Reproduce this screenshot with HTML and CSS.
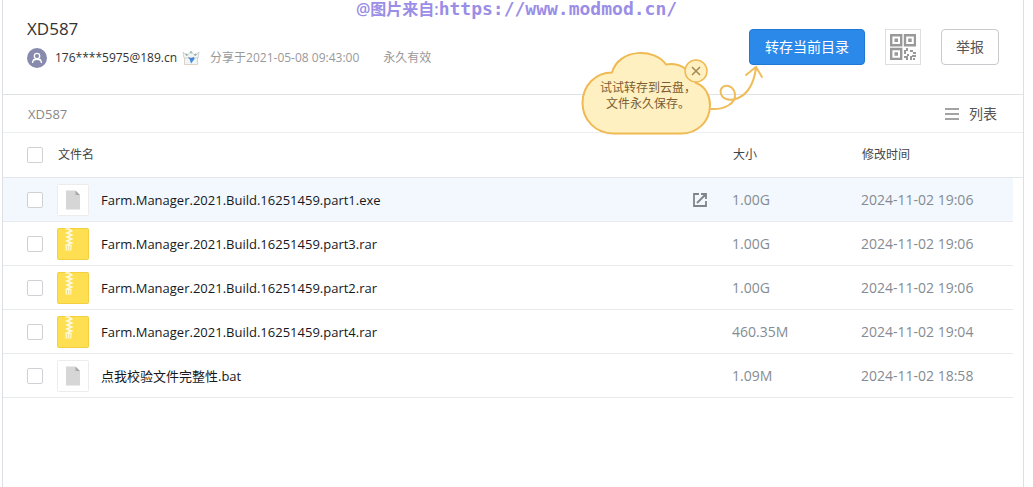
FILE: index.html
```html
<!DOCTYPE html>
<html lang="zh-CN">
<head>
<meta charset="utf-8">
<title>XD587</title>
<link rel="stylesheet" href="styles.css">
</head>
<body>
<svg class="defs" aria-hidden="true">
  <symbol id="doc" viewBox="0 0 32 32">
    <rect x=".5" y=".5" width="31" height="31" rx="1" fill="#fff" stroke="#ececec"/>
    <path d="M9 6.500H18.500L23 11V25.500H9Z" fill="#d6d6d6"/>
    <path d="M18.500 6.500V11H23Z" fill="#a9a9a9"/>
  </symbol>
  <symbol id="rar" viewBox="0 0 32 32">
    <rect width="32" height="32" rx="2" fill="#f4cf3f"/>
    <rect x="1" y="1" width="30" height="30" rx="1" fill="#ffdf52"/>
    <path d="M8.500 1H12l2.500 2L10 5l4.500 2L10 9l4.500 2L10 13l4.500 2L10 17l4.500 1" fill="none" stroke="#fffbe2" stroke-width="1.700"/>
    <path d="M8.500 17.500h6v5h-6z" fill="#fff7cc"/>
    <path d="M10.500 18v4M12.800 18v4" stroke="#f6d964" stroke-width=".8"/>
  </symbol>
</svg>
<div class="watermark"><span>@图片来自:</span><span class="watermark-url">https://www.modmod.cn/</span></div>
<main class="panel">
  <header class="share">
    <div class="share-info">
      <h1 class="title">XD587</h1>
      <div class="meta">
        <svg class="avatar" viewBox="0 0 20 20"><circle cx="10" cy="10" r="10" fill="#888bad"/><circle cx="10" cy="8" r="2.700" fill="none" stroke="#fff" stroke-width="1.300"/><path d="M5.500 15c.2-5 8.800-5 9 0M7 11l-1 2M13 11l1 2" fill="none" stroke="#fff" stroke-width="1.300"/></svg>
        <span class="user">176****5975@189.cn</span>
        <svg class="badge" viewBox="0 0 18 16"><path d="M2.500 5.500h13v9h-13z" fill="#eef5fb" stroke="#ddd2c5"/><path d="M1 2l4 4 4-5 4 5 4-4-1 6H2Z" fill="#f4f5f4" stroke="#c9c8c5" stroke-width=".8"/><path d="M6 7l3 1 3-1 .5 2L9 13.500 8 10Z" fill="#4389d5"/><path d="M3.500 4l2 1M12.500 5l2-1M9 1.500v2" stroke="#82b8b4" stroke-width="1.400"/></svg>
        <span class="shared">分享于2021-05-08 09:43:00</span>
        <span class="valid">永久有效</span>
      </div>
    </div>
    <div class="actions">
      <div class="save">
        <button class="btn primary" type="button">转存当前目录</button>
        <div class="tip">
          <svg class="tip-art" viewBox="0 0 180 86">
            <path d="M33 81.500C16 81.500 2.500 68 2.500 51C2.500 33 16 20.500 32 20.500C39 -4 75 -4 86 12.500C99 10 114 19 116 31C126 34 130 45 130 53C130 70 117 81.500 101 81.500Z" fill="#fff0c1" stroke="#efb953" stroke-width="2"/>
            <circle cx="116" cy="19" r="11" fill="#fff0c1" stroke="#efb953" stroke-width="1.500"/>
            <path d="M131 57C145 58 156 51 155 42C153 30 138 32 141 42C144 52 171 52 176 16M166 23L176 15L182 25" fill="none" stroke="#efbd5b" stroke-width="2" stroke-linecap="round"/>
          </svg>
          <p class="tip-text">试试转存到云盘，<br>文件永久保存。</p>
          <button class="tip-close" type="button" aria-label="关闭"><svg viewBox="0 0 10 10"><path d="M1 1l8 8M9 1L1 9" stroke="#a58452" stroke-width="1.500"/></svg></button>
        </div>
      </div>
      <button class="qr" type="button" aria-label="二维码"><svg viewBox="0 0 26 26"><g fill="none" stroke="#999" stroke-width="2.400"><path d="M1.200 1.200h10v10h-10zM15 1.200h10v10H15zM1.200 15h10v10h-10z"/></g><path d="M4.500 4.500h3.500v3.500H4.500zM18.200 4.500h3.500v3.500h-3.500zM4.500 18.200h3.500v3.500H4.500zM16 14h2v3h-2zM14 16h2v4h-2zM20 16h3v2h-3zM23 18h3v2h-3zM14 22h4v2h-4zM17 20h2v2h-2zM16 24h2v2h-2zM20 22h2v4h-2zM22 21h4v2h-4zM23 24h2v2h-2z" fill="#999"/></svg></button>
      <button class="btn" type="button">举报</button>
    </div>
  </header>
  <nav class="path">
    <a class="crumb" href="#">XD587</a>
    <button class="view" type="button"><svg viewBox="0 0 14 12"><path d="M0 1h14M0 6h14M0 11h14" stroke="#858585" stroke-width="1.500"/></svg>列表</button>
  </nav>
  <table class="files">
    <colgroup><col class="c-check"><col><col class="c-size"><col class="c-date"><col class="c-end"></colgroup>
    <thead>
      <tr><th class="check"><input type="checkbox" aria-label="全选"></th><th>文件名</th><th>大小</th><th>修改时间</th><th></th></tr>
    </thead>
    <tbody>
      <tr class="active"><td class="check"><input type="checkbox" id="f1"></td><td><div class="file"><svg class="type"><use href="#doc"/></svg><label class="name" for="f1">Farm.Manager.2021.Build.16251459.part1.exe</label><button class="open" type="button" aria-label="打开"><svg viewBox="0 0 14 14"><path d="M6 1H1v12h12V8M4 10L12 2M8 1h5v5" fill="none" stroke="#7e858c" stroke-width="1.800"/></svg></button></div></td><td>1.00G</td><td>2024-11-02 19:06</td><td></td></tr>
      <tr><td class="check"><input type="checkbox" id="f2"></td><td><div class="file"><svg class="type"><use href="#rar"/></svg><label class="name" for="f2">Farm.Manager.2021.Build.16251459.part3.rar</label></div></td><td>1.00G</td><td>2024-11-02 19:06</td><td></td></tr>
      <tr><td class="check"><input type="checkbox" id="f3"></td><td><div class="file"><svg class="type"><use href="#rar"/></svg><label class="name" for="f3">Farm.Manager.2021.Build.16251459.part2.rar</label></div></td><td>1.00G</td><td>2024-11-02 19:06</td><td></td></tr>
      <tr><td class="check"><input type="checkbox" id="f4"></td><td><div class="file"><svg class="type"><use href="#rar"/></svg><label class="name" for="f4">Farm.Manager.2021.Build.16251459.part4.rar</label></div></td><td>460.35M</td><td>2024-11-02 19:04</td><td></td></tr>
      <tr><td class="check"><input type="checkbox" id="f5"></td><td><div class="file"><svg class="type"><use href="#doc"/></svg><label class="name" for="f5">点我校验文件完整性.bat</label></div></td><td>1.09M</td><td>2024-11-02 18:58</td><td></td></tr>
    </tbody>
  </table>
</main>
</body>
</html>
```

FILE: styles.css
```css
* { box-sizing: border-box; }
body {
  margin: 0;
  min-height: 100vh;
  display: flex;
  background: #fff;
  color: #333;
  font: 14px/20px "Open Sans", "Noto Sans CJK SC", sans-serif;
}
button { font: inherit; color: inherit; padding: 0; border: 0; background: none; cursor: pointer; }
svg { display: block; }
.defs { position: absolute; width: 0; height: 0; }

.watermark {
  position: absolute;
  top: 0;
  left: 0;
  right: 0;
  text-align: center;
  font-size: 16px;
  line-height: 18px;
  color: #9a8ee6;
  font-weight: 600;
  pointer-events: none;
}
.watermark-url { font-family: "DejaVu Sans Mono", monospace; font-size: 18px; }

.panel { flex: 1; margin: 0 9px 0 2px; border: solid #dcdfe3; border-width: 0 1px; }
.share {
  display: flex;
  justify-content: space-between;
  align-items: flex-start;
  padding: 18px 24px 26px;
  border-bottom: 1px solid #e0e2e5;
}
.title { margin: 0 0 8px; font-size: 17px; line-height: 22px; font-weight: 400; }
.meta { display: flex; align-items: center; font-size: 12px; }
.avatar { width: 20px; height: 20px; margin-right: 8px; }
.badge { width: 18px; height: 16px; margin: 0 10px 0 5px; }
.shared, .valid { color: #999; }
.valid { margin-left: 24px; }

.actions { display: flex; gap: 20px; padding-top: 11px; }
.save { position: relative; }
.btn { height: 36px; padding: 0 14px; border: 1px solid #c8cacd; border-radius: 4px; color: #555; }
.primary { padding: 0 15px; color: #fff; background: #2b89ea; border-color: #1f78d3; }
.qr { width: 36px; height: 36px; padding: 4px; border: 1px solid #dedede; }
.tip { position: absolute; top: 23px; left: -169px; width: 180px; height: 86px; pointer-events: none; }
.tip-art { width: 180px; height: 86px; overflow: visible; }
.tip-text {
  position: absolute;
  top: 28px;
  left: 16px;
  width: 104px;
  margin: 0;
  text-align: center;
  white-space: nowrap;
  font-size: 12px;
  line-height: 16px;
  color: #7d5c32;
}
.tip-close { position: absolute; top: 8px; left: 105px; width: 22px; height: 22px; padding: 6px; pointer-events: auto; }

.path {
  display: flex;
  justify-content: space-between;
  align-items: center;
  height: 38px;
  padding: 0 26px 0 25px;
  border-bottom: 1px solid #eceef0;
}
.crumb { color: #888; font-size: 13px; text-decoration: none; }
.view { display: flex; align-items: center; gap: 10px; color: #555; }
.view svg { width: 14px; height: 12px; }

.files { width: 100%; table-layout: fixed; border-collapse: separate; border-spacing: 0; }
.c-check { width: 54px; }
.c-size { width: 129px; }
.c-date { width: 152px; }
.c-end { width: 10px; }
th, td { padding: 0; text-align: left; }
th { height: 45px; padding: 0 1px; border-bottom: 1px solid #e3e7eb; font-size: 12px; font-weight: 400; color: #444; }
td { height: 44px; border-bottom: 1px solid #e8eaed; color: #858b92; }
td:last-child { border: 0; }
th.check, td.check { padding: 0 0 0 24px; }
input {
  display: block;
  appearance: none;
  width: 16px;
  height: 16px;
  margin: 0;
  border: 1px solid #cfd1d4;
  border-radius: 2px;
  background: #fff;
}
input:checked { background: #2b89ea; }
.active td:not(:last-child) { background: #f2f8fd; }
.file { display: flex; align-items: center; padding-right: 25px; }
.type { width: 32px; height: 32px; margin-right: 12px; }
.name { color: #16181c; font-size: 13px; }
.open { margin-left: auto; }
.open svg { width: 14px; height: 14px; }
```
